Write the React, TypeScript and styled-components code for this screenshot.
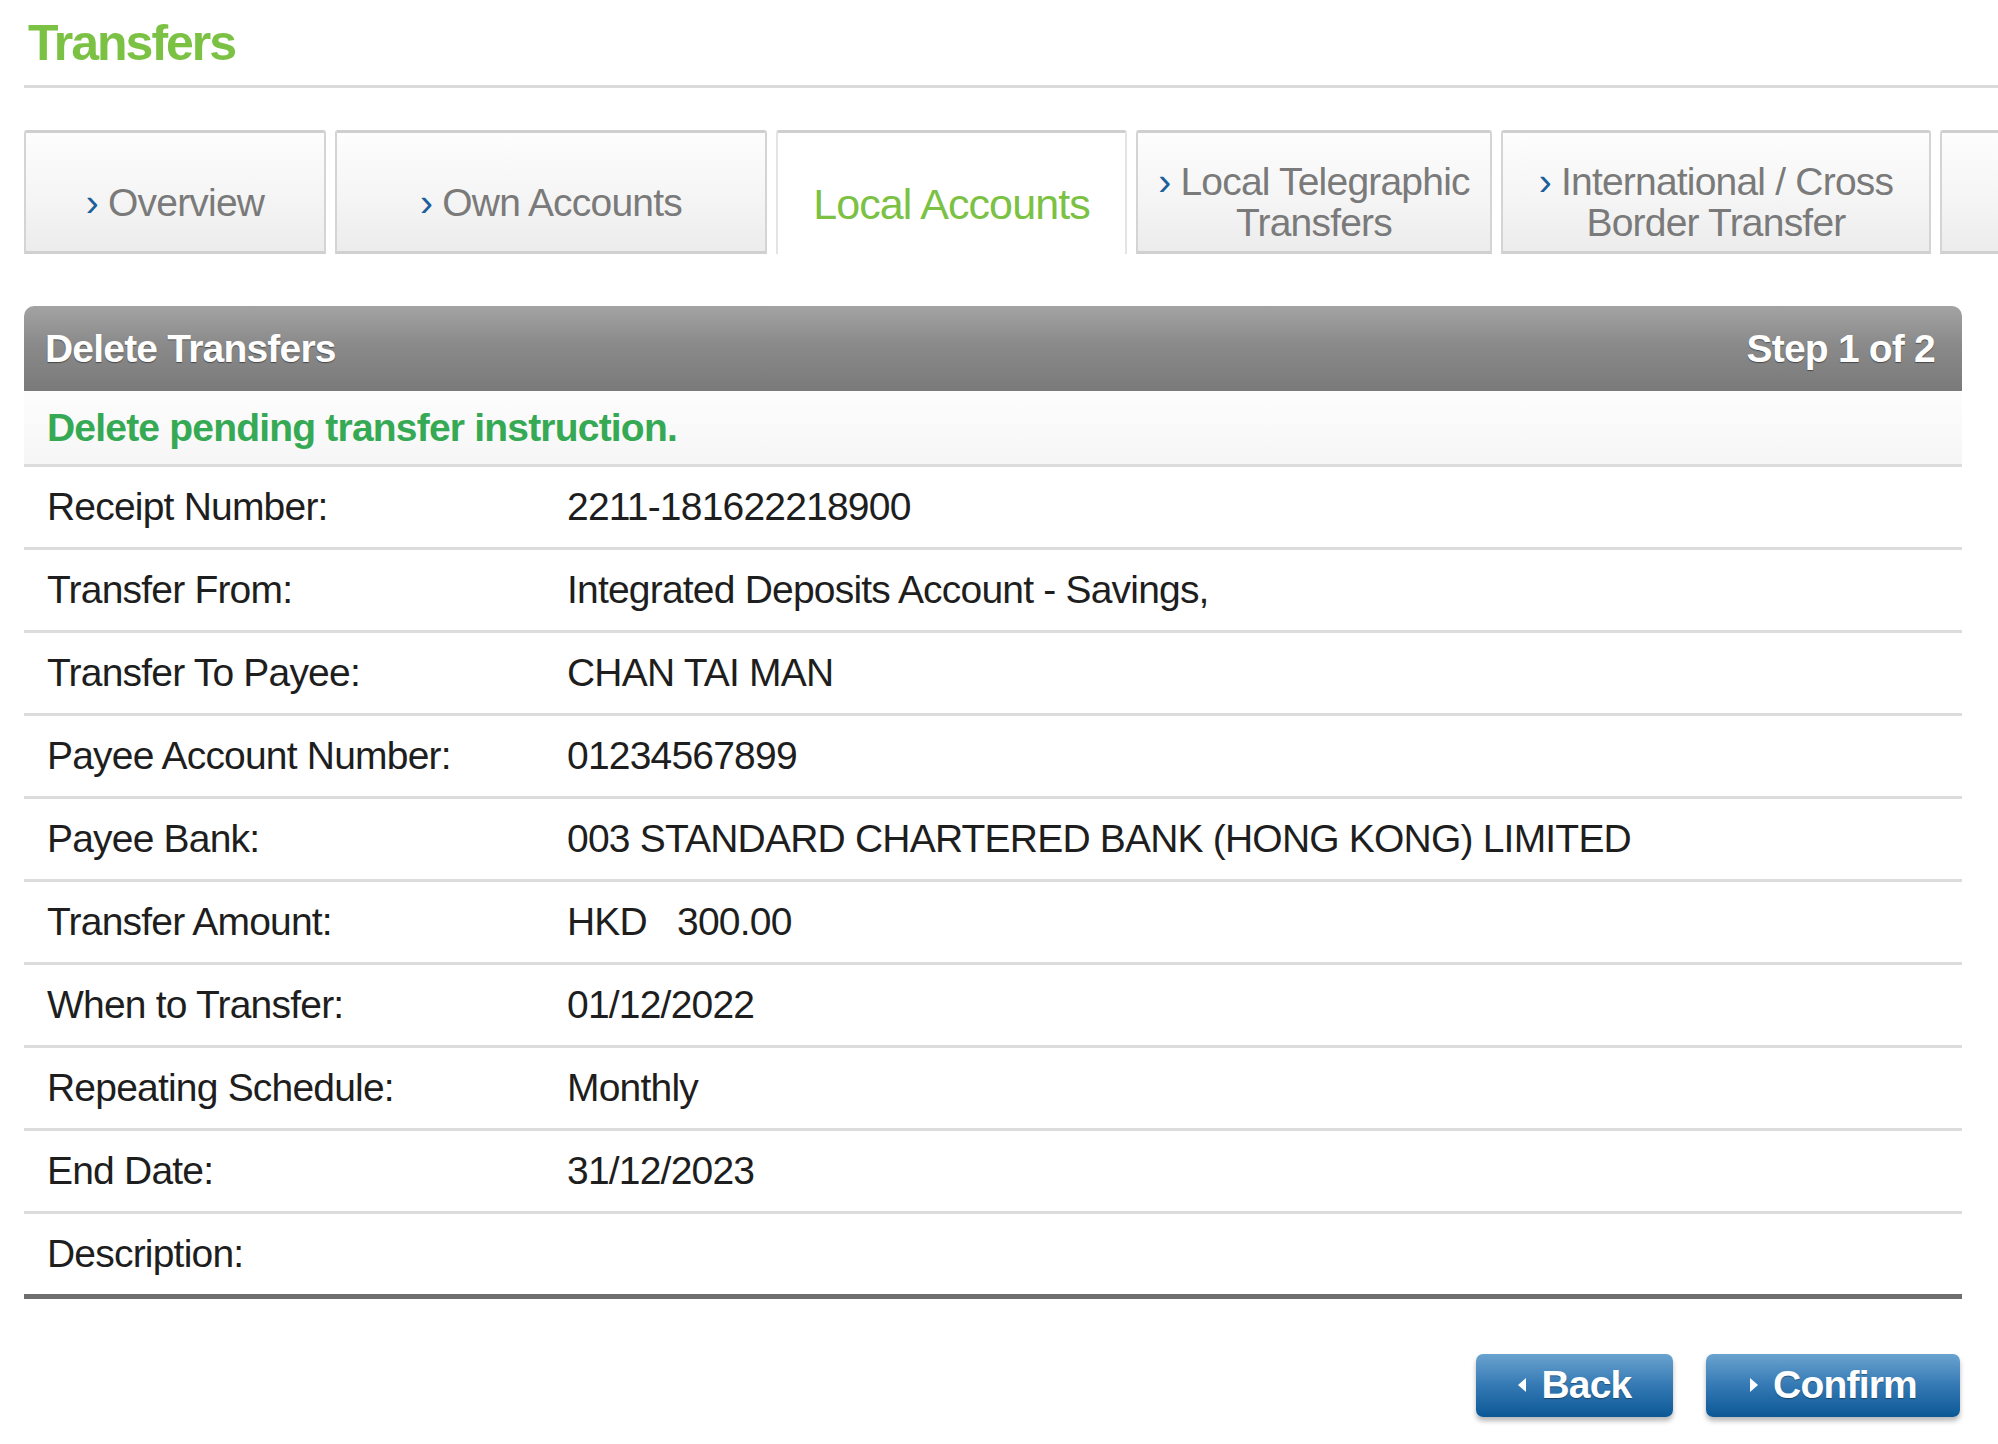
import * as React from 'react';
import styled, { createGlobalStyle } from 'styled-components';

const GlobalStyle = createGlobalStyle`
  html, body {
    margin: 0;
    padding: 0;
    background: #ffffff;
  }
  body {
    font-family: 'Liberation Sans', Arial, sans-serif;
    color: #222;
  }
`;

const Page = styled.div`
  width: 1998px;
  min-height: 1444px;
  overflow: hidden;
  padding-top: 15px;
  box-sizing: border-box;
`;

const TitleBlock = styled.div`
  margin-left: 24px;
  border-bottom: 3px solid #dadada;
  padding: 0 0 14px 4px;
`;

const Title = styled.h1`
  margin: 0;
  font-size: 50px;
  line-height: 56px;
  font-weight: bold;
  letter-spacing: -2px;
  color: #7bc143;
`;

const TabStrip = styled.div`
  display: flex;
  gap: 9px;
  margin: 42px 0 0 24px;
  height: 124px;
  width: 2100px;
`;

const Tab = styled.div<{ $width: number; $active?: boolean }>`
  flex: 0 0 ${(p) => p.$width}px;
  box-sizing: border-box;
  display: flex;
  align-items: center;
  justify-content: center;
  text-align: center;
  border: 2px solid #d4d4d4;
  border-top: 3px solid #cfcfcf;
  border-radius: 3px 3px 0 0;
  background: ${(p) =>
    p.$active ? '#ffffff' : 'linear-gradient(#fdfdfd 0%, #f5f5f5 55%, #ececec 100%)'};
  border-bottom: ${(p) => (p.$active ? 'none' : '3px solid #d0d0d0')};
  border-left-color: ${(p) => (p.$active ? '#e4e4e4' : '#d4d4d4')};
  border-right-color: ${(p) => (p.$active ? '#e4e4e4' : '#d4d4d4')};
  color: ${(p) => (p.$active ? '#7bc143' : '#7a7a7a')};
  font-size: ${(p) => (p.$active ? 43 : 39)}px;
  letter-spacing: ${(p) => (p.$active ? -0.9 : -0.8)}px;
  line-height: 41px;
  padding-top: ${(p) => (p.$active ? 22 : 20)}px;
`;

const Chevron = styled.span`
  color: #1c5f9b;
  margin-right: 10px;
`;

const Panel = styled.div`
  margin: 52px 36px 0 24px;
`;

const PanelHeader = styled.div`
  display: flex;
  justify-content: space-between;
  align-items: center;
  height: 85px;
  padding: 0 27px 0 21px;
  border-radius: 10px 10px 0 0;
  background: linear-gradient(#a3a3a3 0%, #8a8a8a 45%, #7a7a7a 100%);
  color: #ffffff;
  font-size: 39px;
  font-weight: bold;
  letter-spacing: -0.8px;
  text-shadow: 0 1px 1px rgba(0, 0, 0, 0.45);
`;

const Intro = styled.div`
  display: flex;
  align-items: center;
  height: 73px;
  padding: 0 23px;
  background: linear-gradient(#fdfdfd, #f6f6f6);
  border-bottom: 3px solid #dcdcdc;
  color: #36a955;
  font-size: 39px;
  font-weight: bold;
  letter-spacing: -0.8px;
`;

const Row = styled.div<{ $last?: boolean }>`
  display: grid;
  grid-template-columns: 520px 1fr;
  align-items: center;
  height: 80px;
  padding: 0 23px;
  border-bottom: ${(p) => (p.$last ? '5px solid #6e6e6e' : '3px solid #dcdcdc')};
  font-size: 39px;
  letter-spacing: -0.8px;
  color: #1e1e1e;
`;

const Label = styled.div``;

const Value = styled.div`
  white-space: pre;
`;

const Actions = styled.div`
  display: flex;
  justify-content: flex-end;
  gap: 33px;
  margin: 55px 38px 0 0;
`;

const Button = styled.button<{ $width: number }>`
  display: flex;
  align-items: center;
  justify-content: center;
  gap: 14px;
  width: ${(p) => p.$width}px;
  height: 63px;
  border: none;
  border-radius: 7px;
  background: linear-gradient(#6aa3cf 0%, #3479b4 50%, #0b5896 100%);
  box-shadow: 0 4px 5px rgba(0, 0, 0, 0.28);
  color: #ffffff;
  font-family: 'Liberation Sans', Arial, sans-serif;
  font-size: 39px;
  font-weight: bold;
  letter-spacing: -0.8px;
  padding: 0 0 2px;
  text-shadow: 0 1px 1px rgba(0, 0, 0, 0.35);
`;

const Arrow = ({ dir }: { dir: 'left' | 'right' }) => (
  <svg width="10" height="16" viewBox="0 0 10 16">
    {dir === 'left' ? (
      <polygon points="9,1 1,8 9,15" fill="#fff" />
    ) : (
      <polygon points="1,1 9,8 1,15" fill="#fff" />
    )}
  </svg>
);

const details: [string, string][] = [
  ['Receipt Number:', '2211-181622218900'],
  ['Transfer From:', 'Integrated Deposits Account - Savings,'],
  ['Transfer To Payee:', 'CHAN TAI MAN'],
  ['Payee Account Number:', '01234567899'],
  ['Payee Bank:', '003 STANDARD CHARTERED BANK (HONG KONG) LIMITED'],
  ['Transfer Amount:', 'HKD   300.00'],
  ['When to Transfer:', '01/12/2022'],
  ['Repeating Schedule:', 'Monthly'],
  ['End Date:', '31/12/2023'],
  ['Description:', ''],
];

export default function App(): JSX.Element {
  return (
    <Page>
      <GlobalStyle />
      <TitleBlock>
        <Title>Transfers</Title>
      </TitleBlock>

      <TabStrip>
        <Tab $width={302}>
          <div>
            <Chevron>›</Chevron>Overview
          </div>
        </Tab>
        <Tab $width={432}>
          <div>
            <Chevron>›</Chevron>Own Accounts
          </div>
        </Tab>
        <Tab $width={351} $active>
          <div>Local Accounts</div>
        </Tab>
        <Tab $width={356}>
          <div>
            <Chevron>›</Chevron>Local Telegraphic
            <br />
            Transfers
          </div>
        </Tab>
        <Tab $width={430}>
          <div>
            <Chevron>›</Chevron>International / Cross
            <br />
            Border Transfer
          </div>
        </Tab>
        <Tab $width={300} />
      </TabStrip>

      <Panel>
        <PanelHeader>
          <span>Delete Transfers</span>
          <span>Step 1 of 2</span>
        </PanelHeader>
        <Intro>Delete pending transfer instruction.</Intro>
        {details.map(([label, value], i) => (
          <Row key={label} $last={i === details.length - 1}>
            <Label>{label}</Label>
            <Value>{value}</Value>
          </Row>
        ))}
      </Panel>

      <Actions>
        <Button $width={197}>
          <Arrow dir="left" />
          Back
        </Button>
        <Button $width={254}>
          <Arrow dir="right" />
          Confirm
        </Button>
      </Actions>
    </Page>
  );
}
